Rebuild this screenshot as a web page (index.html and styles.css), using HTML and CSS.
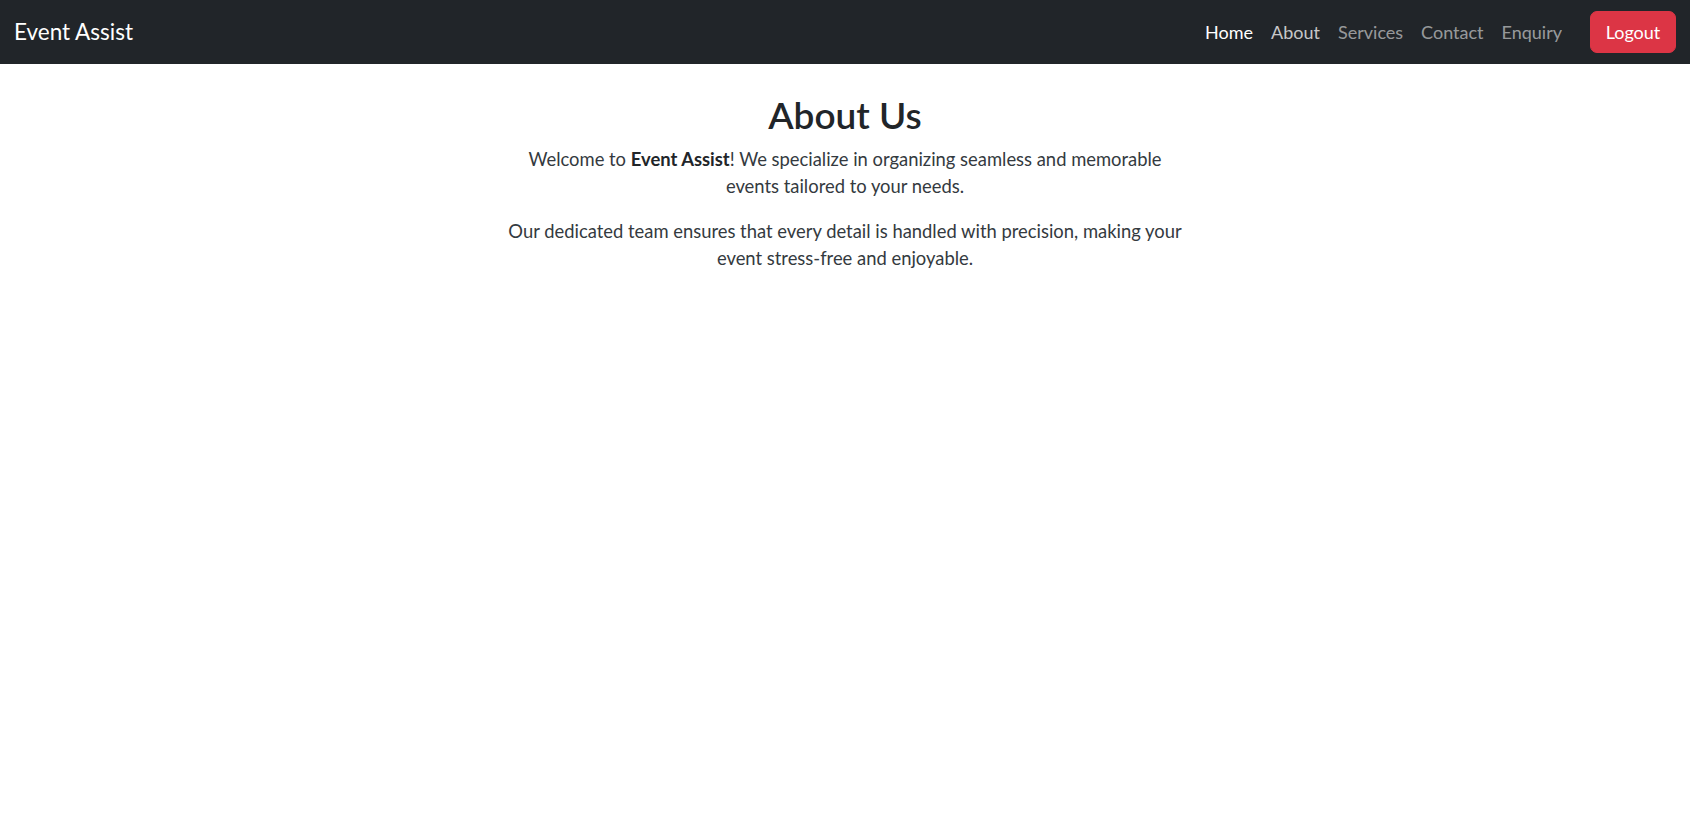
FILE: index.html
```html
<!DOCTYPE html>
<html lang="en">
<head>
<meta charset="utf-8">
<title>About Us - Event Assist</title>
<link rel="stylesheet" href="styles.css">
</head>
<body>
<nav class="navbar">
  <a class="brand" href="#">Event Assist</a>
  <div class="nav-right">
    <ul class="nav-links">
      <li><a class="nav-link active" href="#">Home</a></li>
      <li><a class="nav-link hover" href="#">About</a></li>
      <li><a class="nav-link" href="#">Services</a></li>
      <li><a class="nav-link" href="#">Contact</a></li>
      <li><a class="nav-link" href="#">Enquiry</a></li>
    </ul>
    <button class="btn-logout" type="button">Logout</button>
  </div>
</nav>
<main class="content">
  <h2 class="title">About Us</h2>
  <p>Welcome to <strong>Event Assist</strong>! We specialize in organizing seamless and memorable events tailored to your needs.</p>
  <p>Our dedicated team ensures that every detail is handled with precision, making your event stress-free and enjoyable.</p>
</main>
</body>
</html>
```
FILE: styles.css
```css
* { box-sizing: border-box; }
body {
  margin: 0;
  font-family: "Lato", "Open Sans", sans-serif;
  font-size: 18px;
  line-height: 27px;
  color: #212529;
  background: #fff;
}
.navbar {
  height: 64px;
  background: #212529;
  display: flex;
  align-items: center;
  justify-content: space-between;
  padding: 0 14px;
}
.brand {
  color: #fff;
  text-decoration: none;
  font-size: 22.5px;
  line-height: 34px;
}
.nav-right {
  display: flex;
  align-items: center;
}
.nav-links {
  list-style: none;
  margin: 0;
  padding: 0;
  display: flex;
}
.nav-link {
  display: block;
  padding: 9px 9px;
  color: rgba(255, 255, 255, 0.55);
  text-decoration: none;
  font-size: 18px;
  line-height: 27px;
}
.nav-link.active { color: #fff; }
.nav-link.hover { color: rgba(255, 255, 255, 0.75); }
.btn-logout {
  margin-left: 19px;
  width: 86px;
  height: 42px;
  border: 1px solid #dc3545;
  background: #dc3545;
  color: #fff;
  border-radius: 7px;
  font-family: inherit;
  font-size: 18px;
  line-height: 27px;
  padding: 6px 13px;
  cursor: pointer;
}
.content {
  max-width: 683px;
  margin: 29px auto 0;
  text-align: center;
}
.title {
  margin: 0 0 9px;
  font-size: 37px;
  line-height: 44px;
  font-weight: 600;
  color: #212529;
}
.content p {
  margin: 0 0 18px;
  font-size: 18.4px;
  color: #343a40;
}
.content strong { font-weight: 700; color: #212529; }
```
